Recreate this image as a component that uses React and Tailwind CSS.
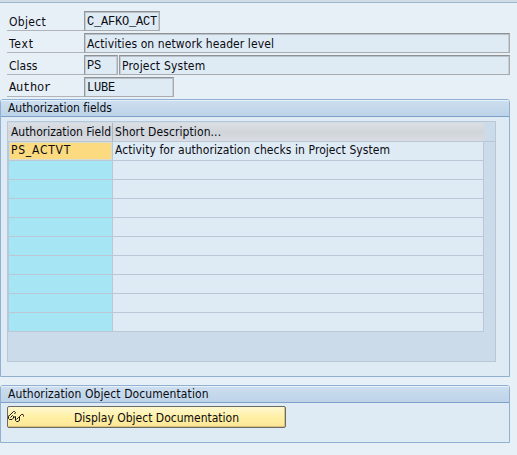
import React from "react";

const mono = "font-['Liberation_Mono',monospace] text-[12px] tracking-[-0.2px]";

function Field({ className = "", children }) {
  return (
    <div className={`h-5 shrink-0 border border-t-[#8f9396] border-l-[#96999c] border-r-[#a9abad] border-b-[#a9abad] bg-[#deeaf4] shadow-[inset_0_1px_0_#b9c2ca,inset_1px_0_0_#c5ced6,inset_-1px_0_0_#c5ced6] pl-[2px] leading-[20px] whitespace-nowrap ${className}`}>
      {children}
    </div>
  );
}

function Row({ label, labelClass = "", children }) {
  return (
    <div className="flex h-[22px]">
      <div className={`h-5 w-[77px] shrink-0 border-b border-[#b0b4b8] pl-[2px] leading-[22px] ${labelClass}`}>{label}</div>
      {children}
    </div>
  );
}

function Panel({ title, titleClass = "", className, children }) {
  return (
    <section className={`w-[510px] rounded-t-[3px] border border-[#8fb0d0] bg-[#deeaf4] ${className}`}>
      <h2 className={`h-[17px] rounded-t-[2px] border-b border-[#7f9fc8] bg-linear-to-b from-[#cddff0] to-[#bdd3e8] pl-[7px] leading-[16px] shadow-[inset_0_1px_0_#e6f0f8] ${titleClass}`}>{title}</h2>
      {children}
    </section>
  );
}

function Glasses() {
  return (
    <svg width="17" height="12" viewBox="0 0 17 12" className="shrink-0" fill="none" stroke="#15150d" strokeWidth="1">
      <path d="M1.5 4.5 L5.5 0.5 H6.5 L7.5 1.5 L6.5 3" />
      <path d="M1.5 4 L0.5 5.5 V7.5 L1.5 8.5 H4 L5.5 7 V5.5 L4.5 4.5 L2.5 6.5" />
      <path d="M5.5 6.5 L7.5 5.5 V9.5 L8.5 10.5 H10 L11.5 9.5 V7.5 L10.5 6.5 L8.5 8.5" />
      <path d="M11.5 7.5 V5.5 L13.5 3.5 H15 L15.5 4.5 V5.5" />
    </svg>
  );
}

export default function App() {
  return (
    <main className="h-[455px] w-[517px] overflow-hidden bg-[#e8f0f7] font-['DejaVu_Sans_Condensed','DejaVu_Sans',sans-serif] text-[12px] whitespace-nowrap text-[#0b0b12] [font-stretch:condensed]">
      <div className="h-[3px] border-b border-[#9db7cd] bg-[#d0dde7]" />
      <div className="mt-2 h-[88px] pl-[7px]">
        <Row label="Object" labelClass="tracking-[0.3px]"><Field className={`w-[76px] ${mono}`}>C_AFKO_ACT</Field></Row>
        <Row label="Text" labelClass="tracking-[0.8px]"><Field className="w-[426px] tracking-[0.09px]">Activities on network header level</Field></Row>
        <Row label="Class">
          <Field className={`mr-px w-[34px] ${mono}`}>PS</Field>
          <Field className="w-[391px] tracking-[0.2px]">Project System</Field>
        </Row>
        <Row label="Author" labelClass={mono}><Field className={`w-[90px] ${mono}`}>LUBE</Field></Row>
      </div>
      <Panel title="Authorization fields" titleClass="tracking-[-0.04px]" className="h-[278px]">
        <div className="mt-1 ml-[6px] h-[241px] w-[489px] border border-[#b9c7d6] bg-[#ccdbe9]">
          <div className="flex h-5 border-b border-[#b9c7d6] pt-px">
            <div className="h-[18px] w-[105px] border-r border-[#aab6c3] bg-linear-to-b from-[#dcdfe3] via-[#d0d5da] to-[#d9dce2] pl-[3px] leading-[19px] tracking-[-0.03px]">Authorization Field</div>
            <div className="h-[18px] w-[371px] bg-linear-to-b from-[#dcdfe3] via-[#d0d5da] to-[#d9dce2] pl-[2px] leading-[19px] tracking-[0.1px]">Short Description...</div>
          </div>
          {Array.from({ length: 10 }, (_, i) => (
            <div key={i} className="flex h-[19px] w-[476px] border-r border-b border-[#b9c7d6] bg-[#deeaf4]">
              <div className="w-[105px] border-r border-l border-[#b9c7d6] bg-[#a6e5f3]">
                {i === 0 && <div className="h-[18px] border border-[#d9dcd0] bg-[#fcdb80] pl-px leading-[15px] tracking-[0.75px]">PS_ACTVT</div>}
              </div>
              <div className="pl-[2px] leading-[17px] tracking-[0.07px]">{i === 0 && "Activity for authorization checks in Project System"}</div>
            </div>
          ))}
        </div>
      </Panel>
      <Panel title="Authorization Object Documentation" titleClass="tracking-[0.09px]" className="mt-2 h-[58px]">
        <button className="mt-[3px] ml-[6px] flex h-[22px] w-[279px] items-center rounded-[2px] border border-[#6b6b66] bg-linear-to-b from-[#fff8cf] via-[#fff0a5] to-[#fde696] shadow-[inset_-1px_-1px_0_#dcc179]">
          <Glasses />
          <span className="ml-[49px] pt-px">Display Object Documentation</span>
        </button>
      </Panel>
    </main>
  );
}
